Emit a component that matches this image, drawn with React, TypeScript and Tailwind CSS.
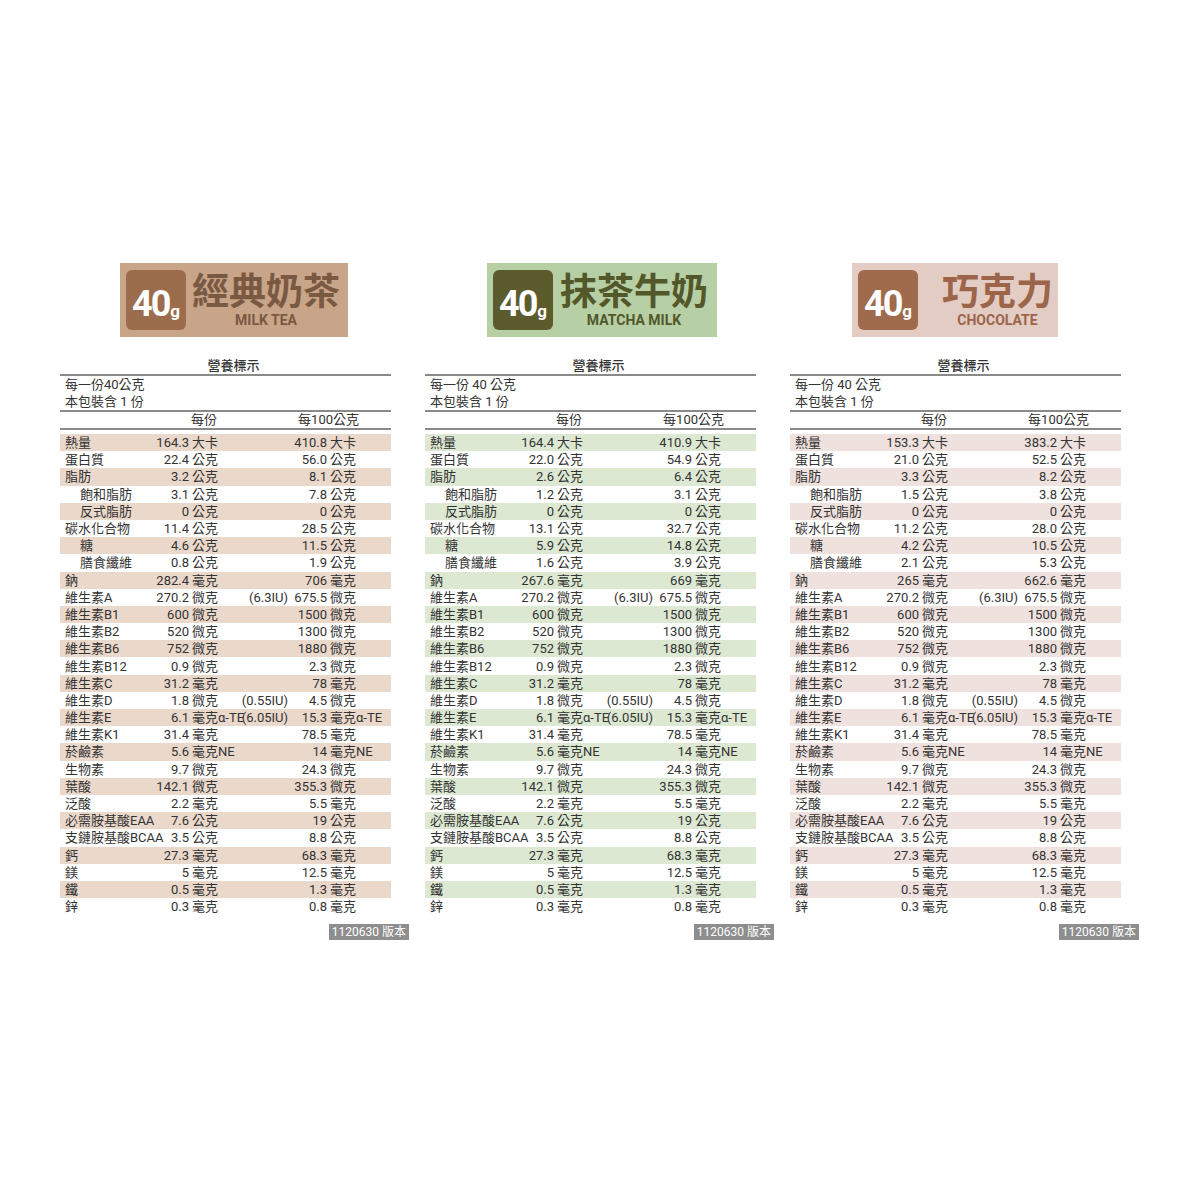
import React from "react";

type Row = {
  label: string;
  indent?: boolean;
  v1: string;
  u1: string;
  iu?: string;
  v2: string;
  u2: string;
};

const common: Row[] = [
  { label: "維生素A", v1: "270.2", u1: "微克", iu: "(6.3IU)", v2: "675.5", u2: "微克" },
  { label: "維生素B1", v1: "600", u1: "微克", v2: "1500", u2: "微克" },
  { label: "維生素B2", v1: "520", u1: "微克", v2: "1300", u2: "微克" },
  { label: "維生素B6", v1: "752", u1: "微克", v2: "1880", u2: "微克" },
  { label: "維生素B12", v1: "0.9", u1: "微克", v2: "2.3", u2: "微克" },
  { label: "維生素C", v1: "31.2", u1: "毫克", v2: "78", u2: "毫克" },
  { label: "維生素D", v1: "1.8", u1: "微克", iu: "(0.55IU)", v2: "4.5", u2: "微克" },
  { label: "維生素E", v1: "6.1", u1: "毫克α-TE", iu: "(6.05IU)", v2: "15.3", u2: "毫克α-TE" },
  { label: "維生素K1", v1: "31.4", u1: "毫克", v2: "78.5", u2: "毫克" },
  { label: "菸鹼素", v1: "5.6", u1: "毫克NE", v2: "14", u2: "毫克NE" },
  { label: "生物素", v1: "9.7", u1: "微克", v2: "24.3", u2: "微克" },
  { label: "葉酸", v1: "142.1", u1: "微克", v2: "355.3", u2: "微克" },
  { label: "泛酸", v1: "2.2", u1: "毫克", v2: "5.5", u2: "毫克" },
  { label: "必需胺基酸EAA", v1: "7.6", u1: "公克", v2: "19", u2: "公克" },
  { label: "支鏈胺基酸BCAA", v1: "3.5", u1: "公克", v2: "8.8", u2: "公克" },
  { label: "鈣", v1: "27.3", u1: "毫克", v2: "68.3", u2: "毫克" },
  { label: "鎂", v1: "5", u1: "毫克", v2: "12.5", u2: "毫克" },
  { label: "鐵", v1: "0.5", u1: "毫克", v2: "1.3", u2: "毫克" },
  { label: "鋅", v1: "0.3", u1: "毫克", v2: "0.8", u2: "毫克" },
];

const macros = (m: string[][]): Row[] => {
  const names: [string, boolean, string][] = [
    ["熱量", false, "大卡"],
    ["蛋白質", false, "公克"],
    ["脂肪", false, "公克"],
    ["飽和脂肪", true, "公克"],
    ["反式脂肪", true, "公克"],
    ["碳水化合物", false, "公克"],
    ["糖", true, "公克"],
    ["膳食纖維", true, "公克"],
    ["鈉", false, "毫克"],
  ];
  return names.map(([label, indent, u], i) => ({
    label,
    indent,
    v1: m[i][0],
    u1: u,
    v2: m[i][1],
    u2: u,
  }));
};

const products = [
  {
    zh: "經典奶茶",
    en: "MILK TEA",
    boxW: "ml-[60px] w-[228px]",
    box: "bg-[#c8a488]",
    square: "bg-[#9c6d4c]",
    ink: "text-[#7a5942]",
    textPad: "",
    band: "bg-[#ead8cb]",
    serving: "每一份40公克",
    rows: macros([
      ["164.3", "410.8"],
      ["22.4", "56.0"],
      ["3.2", "8.1"],
      ["3.1", "7.8"],
      ["0", "0"],
      ["11.4", "28.5"],
      ["4.6", "11.5"],
      ["0.8", "1.9"],
      ["282.4", "706"],
    ]),
  },
  {
    zh: "抹茶牛奶",
    en: "MATCHA MILK",
    boxW: "ml-[62px] w-[230px]",
    box: "bg-[#b6cfa5]",
    square: "bg-[#5c5b2d]",
    ink: "text-[#53582a]",
    textPad: "",
    band: "bg-[#dce8d2]",
    serving: "每一份 40 公克",
    rows: macros([
      ["164.4", "410.9"],
      ["22.0", "54.9"],
      ["2.6", "6.4"],
      ["1.2", "3.1"],
      ["0", "0"],
      ["13.1", "32.7"],
      ["5.9", "14.8"],
      ["1.6", "3.9"],
      ["267.6", "669"],
    ]),
  },
  {
    zh: "巧克力",
    en: "CHOCOLATE",
    boxW: "ml-[62px] w-[206px]",
    box: "bg-[#e3ccc4]",
    square: "bg-[#a06a4c]",
    ink: "text-[#9c6449]",
    textPad: "pl-[20px]",
    band: "bg-[#efe1dd]",
    serving: "每一份 40 公克",
    rows: macros([
      ["153.3", "383.2"],
      ["21.0", "52.5"],
      ["3.3", "8.2"],
      ["1.5", "3.8"],
      ["0", "0"],
      ["11.2", "28.0"],
      ["4.2", "10.5"],
      ["2.1", "5.3"],
      ["265", "662.6"],
    ]),
  },
];

const Rule = () => <div className="h-[2px] w-full bg-[#8a8a8a]" />;

const Panel = ({ p }: { p: (typeof products)[number] }) => {
  const rows = [...p.rows, ...common];
  return (
    <div className="flex w-[350px] flex-col">
      {/* Flavour badge */}
      <div className={`flex h-[74px] items-center gap-[4px] px-[6px] ${p.boxW} ${p.box}`}>
        <div
          className={`flex h-[60px] w-[60px] shrink-0 items-end justify-center rounded-[6px] pb-[12px] text-white ${p.square}`}
        >
          <span className="text-[36px] font-bold leading-[28px] tracking-[-2px]">40</span>
          <span className="ml-[1px] text-[17px] font-bold leading-[14px]">g</span>
        </div>
        <div className={`flex flex-1 flex-col items-center whitespace-nowrap ${p.ink} ${p.textPad}`}>
          <span className="text-[37px] font-bold leading-[40px]">{p.zh}</span>
          <span className="text-[14px] font-bold leading-[14px]">{p.en}</span>
        </div>
      </div>

      {/* Nutrition table */}
      <div className="mt-[20px] w-[331px] text-[13px] text-[#333333]">
        <div className="h-[17px] pl-[16px] text-center font-medium leading-[17px]">營養標示</div>
        <Rule />
        <div className="pl-[5px] leading-[17px]">
          <div>{p.serving}</div>
          <div>本包裝含 1 份</div>
        </div>
        <Rule />
        <div className="flex h-[16px] leading-[16px]">
          <span className="w-[157px] text-right">每份</span>
          <span className="w-[142px] text-right">每100公克</span>
        </div>
        <Rule />
        <div className="mt-[4px]">
          {rows.map((r, i) => (
            <div
              key={r.label}
              className={`grid h-[17.2px] grid-cols-[95px_34px_60px_39px_39px_1fr] items-center whitespace-nowrap leading-[17px] ${
                i % 2 === 0 ? p.band : ""
              }`}
            >
              <span className={r.indent ? "pl-[20px]" : "pl-[5px]"}>{r.label}</span>
              <span className="flex justify-end">{r.v1}</span>
              <span className="pl-[3px]">{r.u1}</span>
              <span className="flex justify-end">{r.iu ?? ""}</span>
              <span className="flex justify-end">{r.v2}</span>
              <span className="pl-[3px]">{r.u2}</span>
            </div>
          ))}
        </div>
        <div className="mt-[9px] flex w-[349px] justify-end">
          <span className="h-[16px] bg-[#8e8e8e] px-[3px] text-[12px] leading-[16px] text-white">1120630 版本</span>
        </div>
      </div>
    </div>
  );
};

export default function App() {
  return (
    <div
      className="min-h-[1200px] w-[1200px] bg-white pt-[263px] pl-[60px]"
      style={{ fontFamily: '"Roboto", "Noto Sans CJK TC", sans-serif' }}
    >
      <div className="flex gap-[15px]">
        {products.map((p) => (
          <Panel key={p.en} p={p} />
        ))}
      </div>
    </div>
  );
}
